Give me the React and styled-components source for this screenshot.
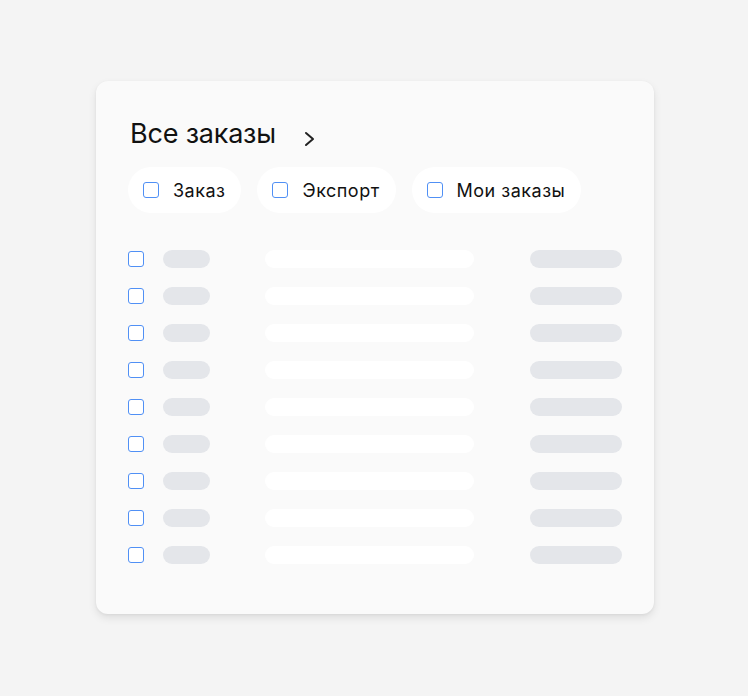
import React from "react";
import styled, { createGlobalStyle } from "styled-components";

const Global = createGlobalStyle`
  html, body { margin: 0; padding: 0; background: #f4f4f4; }
  body { font-family: Inter, "Noto Sans", sans-serif; color: #111; }
`;

const Page = styled.div`
  width: 748px;
  height: 696px;
  box-sizing: border-box;
  padding: 81px 0 0 96px;
`;

const Card = styled.div`
  width: 558px;
  height: 533px;
  box-sizing: border-box;
  background: #fafafa;
  border-radius: 12px;
  box-shadow: 0 4px 8px rgba(0, 0, 0, 0.09), 0 1px 3px rgba(0, 0, 0, 0.05);
  padding: 36px 32px 0 32px;
  display: flex;
  flex-direction: column;
`;

const Header = styled.div`
  display: flex;
  align-items: center;
  gap: 27px;
  height: 34px;
`;

const Title = styled.h1`
  margin: 0 0 0 2px;
  font-size: 27px;
  line-height: 34px;
  font-weight: 400;
  letter-spacing: -0.2px;
  color: #111;
`;

const Chevron = styled.svg`
  width: 14px;
  height: 16px;
  margin-top: 9px;
`;

const Chips = styled.div`
  display: flex;
  gap: 16px;
  margin-top: 16px;
`;

const Chip = styled.div`
  height: 46px;
  border-radius: 23px;
  background: #ffffff;
  display: flex;
  align-items: center;
  gap: 14px;
  padding: 0 16px 0 15px;
  font-size: 18px;
  letter-spacing: 0.5px;
  color: #111;
`;

const Box = styled.span`
  width: 16px;
  height: 16px;
  box-sizing: border-box;
  border: 1.8px solid #5090f5;
  border-radius: 3px;
  background: #fff;
  flex: none;
`;

const List = styled.div`
  display: flex;
  flex-direction: column;
  gap: 19px;
  margin-top: 37px;
`;

const Row = styled.div`
  display: grid;
  grid-template-columns: 35px 102px 265px 92px;
  align-items: center;
  height: 18px;
`;

const Pill = styled.span`
  display: block;
  height: 18px;
  width: ${(p) => p.$w}px;
  border-radius: 9px;
  background: ${(p) => (p.$light ? "#ffffff" : "#e4e6ea")};
`;

const chips = ["Заказ", "Экспорт", "Мои заказы"];

export default function App() {
  return (
    <>
      <Global />
      <Page>
        <Card>
          <Header>
            <Title>Все заказы</Title>
            <Chevron viewBox="0 0 14 16" fill="none">
              <path d="M3 2 L10 8 L3 14" stroke="#222" strokeWidth="2" strokeLinecap="round" strokeLinejoin="round" />
            </Chevron>
          </Header>
          <Chips>
            {chips.map((c) => (
              <Chip key={c}>
                <Box />
                {c}
              </Chip>
            ))}
          </Chips>
          <List>
            {Array.from({ length: 9 }).map((_, i) => (
              <Row key={i}>
                <Box />
                <Pill $w={47} />
                <Pill $w={209} $light />
                <Pill $w={92} />
              </Row>
            ))}
          </List>
        </Card>
      </Page>
    </>
  );
}
